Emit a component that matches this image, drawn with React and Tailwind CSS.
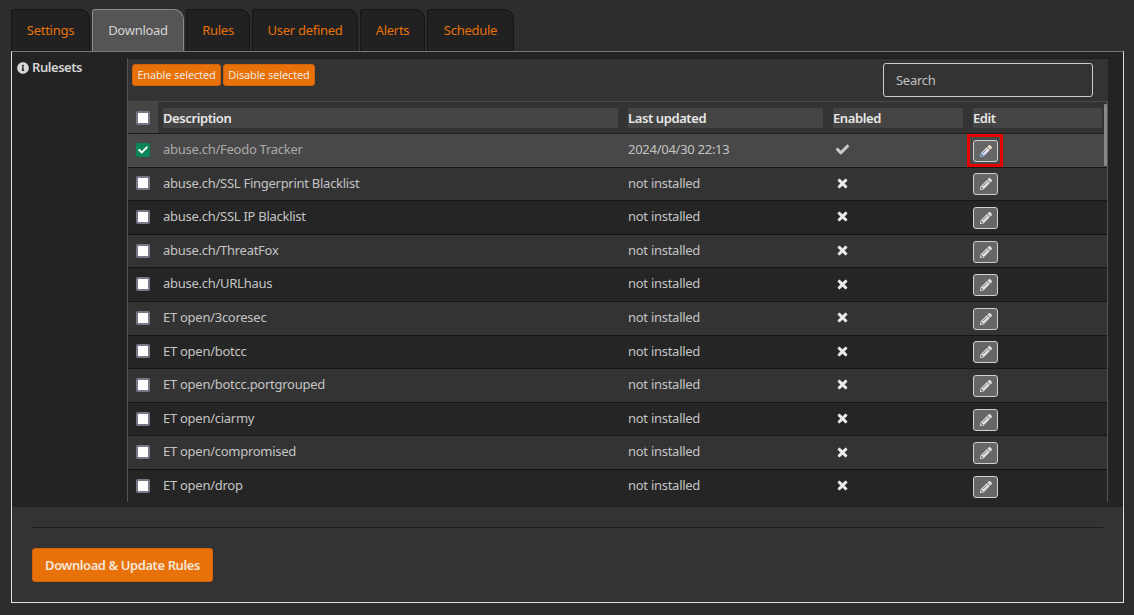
import React from "react"
import { FaCheck, FaTimes, FaInfoCircle, FaPencilAlt } from "react-icons/fa"

const tabs = [
  { name: "Settings", w: "w-[79px]" },
  { name: "Download", w: "w-[92px]", active: true },
  { name: "Rules", w: "w-[64px]" },
  { name: "User defined", w: "w-[106px]" },
  { name: "Alerts", w: "w-[65px]" },
  { name: "Schedule", w: "w-[87px]" },
]

const rules = [
  "abuse.ch/Feodo Tracker",
  "abuse.ch/SSL Fingerprint Blacklist",
  "abuse.ch/SSL IP Blacklist",
  "abuse.ch/ThreatFox",
  "abuse.ch/URLhaus",
  "ET open/3coresec",
  "ET open/botcc",
  "ET open/botcc.portgrouped",
  "ET open/ciarmy",
  "ET open/compromised",
  "ET open/drop",
]

const Checkbox = ({ checked }) =>
  checked ? (
    <span className="w-[14px] h-[14px] rounded-[2px] bg-[#0b8457] flex items-center justify-center text-white">
      <FaCheck className="text-[10px]" />
    </span>
  ) : (
    <span className="w-[14px] h-[14px] rounded-[2px] bg-white border-2 border-[#77778a] block" />
  )

const App = () => {
  return (
    <div className="w-[1134px] h-[615px] bg-[#2d2d2d] pt-[9px] px-[11px] overflow-hidden font-['Noto_Sans',sans-serif] text-[13px] tracking-[-0.27px]">
      <svg className="absolute w-0 h-0">
        <defs>
          <linearGradient id="pencilTint" x1="0" y1="1" x2="1" y2="0">
            <stop offset="0" stopColor="#7fb0ee" />
            <stop offset="0.45" stopColor="#e8e8f0" />
            <stop offset="0.85" stopColor="#f0e0c8" />
            <stop offset="1" stopColor="#eeb070" />
          </linearGradient>
        </defs>
      </svg>

      <div className="flex gap-[2px] h-[42px]">
        {tabs.map((tab) => (
          <div
            key={tab.name}
            className={
              tab.active
                ? `${tab.w} flex items-center justify-center rounded-tr-[10px] rounded-tl-[3px] border border-b-0 border-[#8a8a8a] bg-[#555555] text-[#d4d4d4]`
                : `${tab.w} flex items-center justify-center rounded-tr-[10px] rounded-tl-[3px] border border-b-0 border-[#151515] bg-[#212121] text-[#e8710a]`
            }
          >
            {tab.name}
          </div>
        ))}
      </div>

      <div className="w-[1113px] h-[552px] border border-[#e0e0e0] border-t-[#777777] bg-[#333333]">
        <div className="flex h-[455px] bg-[#232323]">
          <div className="w-[115px] shrink-0 pt-[6px] pl-[5px] flex items-start gap-[3px] font-semibold text-[#d4d4d4] tracking-[-0.45px]">
            <FaInfoCircle className="text-[12px] mt-[4px] text-[#d8d8d8]" />
            <span>Rulesets</span>
          </div>

          <div className="w-[981px] mt-[6px] h-[444px] border-l border-[#555555] flex flex-col overflow-hidden">
            <div className="h-[44px] shrink-0 bg-[#333333] border-t border-[#1c1c1c] border-b border-b-[#4a4a4a] flex justify-between pl-[4px] pr-[15px]">
              <div className="flex gap-[2px] pt-[5px]">
                <button className="h-[22px] w-[89px] bg-[#e8710a] border border-[#d0620a] rounded-[3px] text-[11px] text-[#f0e6dc] tracking-[-0.15px]">
                  Enable selected
                </button>
                <button className="h-[22px] w-[92px] bg-[#e8710a] border border-[#d0620a] rounded-[3px] text-[11px] text-[#f0e6dc] tracking-[-0.15px]">
                  Disable selected
                </button>
              </div>
              <div className="w-[210px] h-[34px] mt-[4px] pt-[1px] border border-[#cccccc] rounded-[3px] pl-[12px] flex items-center text-[#c0c0c0]">
                Search
              </div>
            </div>

            <div className="relative flex-1 overflow-hidden">
              <div className="h-[32px] flex bg-[#333333] border-b border-[#1c1c1c] text-[#e8e8e8] font-semibold tracking-[-0.4px]">
                <div className="w-[30px] bg-[#444444] flex items-center justify-center mr-[5px]">
                  <Checkbox />
                </div>
                <div className="w-[455px] h-[20px] mt-[6px] pt-[1px] bg-[#444444] flex items-center">Description</div>
                <div className="w-[195px] h-[20px] mt-[6px] pt-[1px] ml-[10px] bg-[#444444] flex items-center">Last updated</div>
                <div className="w-[130px] h-[20px] mt-[6px] pt-[1px] ml-[10px] bg-[#444444] flex items-center">Enabled</div>
                <div className="w-[129px] h-[20px] mt-[6px] pt-[1px] ml-[10px] bg-[#444444] flex items-center">Edit</div>
              </div>

              {rules.map((rule, i) => (
                <div
                  key={rule}
                  className={`h-[33.6px] flex items-center border-b border-[#151515] text-[#c4c4c4] ${
                    i === 0 ? "bg-[#484848]" : i % 2 === 1 ? "bg-[#333333]" : "bg-[#252525]"
                  }`}
                >
                  <div className="w-[30px] -mt-[1px] flex justify-center mr-[5px]">
                    <Checkbox checked={i === 0} />
                  </div>
                  <div className={`w-[465px] -mt-[1px] ${i === 0 ? "text-[#aaaaaa]" : ""}`}>{rule}</div>
                  <div className="w-[205px] -mt-[1px]">{i === 0 ? "2024/04/30 22:13" : "not installed"}</div>
                  <div className="w-[140px] -mt-[1px] pl-[3px]">
                    {i === 0 ? (
                      <FaCheck className="text-[13px] text-[#c8c8c8] stroke-[#c8c8c8] stroke-[20px]" />
                    ) : (
                      <FaTimes className="text-[13px] text-[#eeeeee] stroke-[#eeeeee] stroke-[30px]" />
                    )}
                  </div>
                  <div className="relative w-[25px] h-[22px] mt-[1px] rounded-[3px] border border-[#d0d0d0] bg-[#666666] flex items-center justify-center text-[#dedede]">
                    <FaPencilAlt className={i === 0 ? "text-[12px] fill-[url(#pencilTint)]" : "text-[12px]"} />
                    {i === 0 && (
                      <span className="absolute -left-[7px] -right-[6px] -top-[7px] -bottom-[6px] border-[3px] border-[#e60000]" />
                    )}
                  </div>
                </div>
              ))}

              <div className="absolute top-0 right-0 w-[4px] h-full border-r border-[#555555]">
                <div className="w-[3px] h-[62px] mt-[2px] bg-[#888888] rounded-[1px]" />
              </div>
            </div>
          </div>
        </div>

        <div className="px-[20px] pt-[20px]">
          <div className="w-[1071px] border-t border-[#1c1c1c]" />
          <button className="mt-[20px] w-[181px] h-[34px] pt-[1px] bg-[#e8710a] border border-[#d0620a] rounded-[3px] font-semibold text-[#f5e6d8] tracking-[-0.42px]">
            Download &amp; Update Rules
          </button>
        </div>
      </div>
    </div>
  )
}

export default App
